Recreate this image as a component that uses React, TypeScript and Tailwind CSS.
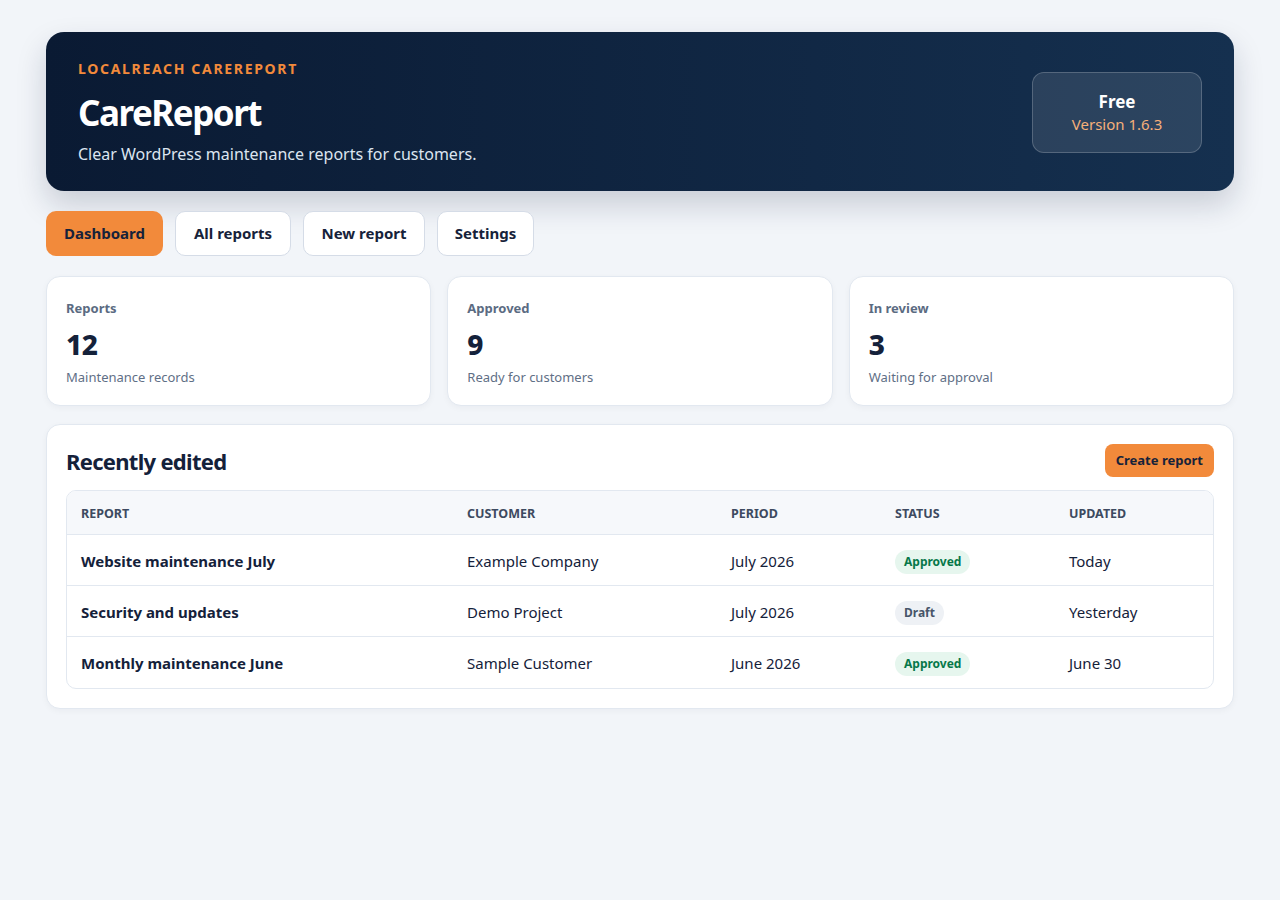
import React from "react";

const rows = [
  { report: "Website maintenance July", customer: "Example Company", period: "July 2026", status: "Approved", updated: "Today" },
  { report: "Security and updates", customer: "Demo Project", period: "July 2026", status: "Draft", updated: "Yesterday" },
  { report: "Monthly maintenance June", customer: "Sample Customer", period: "June 2026", status: "Approved", updated: "June 30" },
];

const cols = "grid grid-cols-[386px_264px_164px_174px_1fr] items-center";

export default function App() {
  return (
    <div className="min-h-[900px] bg-[#f2f5f9] px-[46px] pt-[32px] text-[#14213a]" style={{ fontFamily: '"Noto Sans", sans-serif' }}>
      <header className="flex items-center justify-between rounded-[18px] bg-gradient-to-r from-[#0a1a33] to-[#15304f] px-[32px] pt-[28px] pb-[26px] shadow-[0_14px_30px_rgba(15,30,60,0.18)]">
        <div>
          <div className="text-[14px] font-bold uppercase tracking-[0.12em] text-[#f28a3b] leading-[18px]">LocalReach CareReport</div>
          <h1 className="mt-[13px] text-[35px] font-bold leading-[44px] tracking-[-1.5px] text-white">CareReport</h1>
          <p className="mt-[8px] text-[16px] leading-[22px] text-[#dce5f0]">Clear WordPress maintenance reports for customers.</p>
        </div>
        <div className="flex h-[81px] w-[170px] flex-col items-center justify-center rounded-[12px] border border-white/20 bg-white/10">
          <div className="text-[17px] font-bold leading-[22px] text-white">Free</div>
          <div className="text-[15px] leading-[22px] text-[#f6b07a]">Version 1.6.3</div>
        </div>
      </header>

      <nav className="mt-[20px] flex gap-[12px]">
        <button className="h-[45px] w-[117px] rounded-[10px] bg-[#f28a3b] text-[15px] font-bold text-[#16223a]">Dashboard</button>
        <button className="h-[45px] w-[116px] rounded-[10px] border border-[#d5dce7] bg-white text-[15px] font-bold text-[#16223a]">All reports</button>
        <button className="h-[45px] w-[122px] rounded-[10px] border border-[#d5dce7] bg-white text-[15px] font-bold text-[#16223a]">New report</button>
        <button className="h-[45px] w-[97px] rounded-[10px] border border-[#d5dce7] bg-white text-[15px] font-bold text-[#16223a]">Settings</button>
      </nav>

      <div className="mt-[20px] grid grid-cols-3 gap-[16px]">
        {[
          ["Reports", "12", "Maintenance records"],
          ["Approved", "9", "Ready for customers"],
          ["In review", "3", "Waiting for approval"],
        ].map(([l, n, s]) => (
          <div key={l} className="h-[130px] rounded-[14px] border border-[#e2e8f0] bg-white px-[19px] pt-[22px] shadow-[0_2px_6px_rgba(15,30,60,0.04)]">
            <div className="text-[13px] font-bold leading-[18px] text-[#5b6b82]">{l}</div>
            <div className="mt-[9px] text-[28px] font-extrabold leading-[36px] tracking-[-0.5px] text-[#14213a]">{n}</div>
            <div className="mt-[6px] text-[13px] leading-[18px] text-[#5f6f86]">{s}</div>
          </div>
        ))}
      </div>

      <section className="mt-[18px] rounded-[14px] border border-[#e2e8f0] bg-white p-[19px] shadow-[0_2px_6px_rgba(15,30,60,0.04)]">
        <div className="flex items-start justify-between">
          <h2 className="text-[22px] font-bold leading-[35px] tracking-[-0.7px] text-[#14213a]">Recently edited</h2>
          <button className="h-[33px] rounded-[8px] bg-[#f28a3b] px-[11px] text-[13px] font-bold text-[#16223a]">Create report</button>
        </div>
        <div className="mt-[11px] overflow-hidden rounded-[10px] border border-[#e2e8f0]">
          <div className={`${cols} h-[44px] border-b border-[#e2e8f0] bg-[#f6f8fb] px-[14px] pt-[3px] text-[12.5px] font-bold uppercase text-[#3d4a60]`}>
            <div>Report</div>
            <div>Customer</div>
            <div>Period</div>
            <div>Status</div>
            <div>Updated</div>
          </div>
          {rows.map((r, i) => (
            <div key={r.report} className={`${cols} h-[51px] px-[14px] pt-[2px] text-[15px] text-[#14213a] ${i < rows.length - 1 ? "border-b border-[#e2e8f0]" : ""}`}>
              <div className="font-bold">{r.report}</div>
              <div>{r.customer}</div>
              <div>{r.period}</div>
              <div>
                {r.status === "Approved" ? (
                  <span className="inline-block rounded-full bg-[#e6f6ee] px-[9px] py-[3px] text-[12px] font-bold text-[#06784a]">Approved</span>
                ) : (
                  <span className="inline-block rounded-full bg-[#eef1f5] px-[9px] py-[3px] text-[12px] font-bold text-[#475569]">Draft</span>
                )}
              </div>
              <div>{r.updated}</div>
            </div>
          ))}
        </div>
      </section>
    </div>
  );
}
